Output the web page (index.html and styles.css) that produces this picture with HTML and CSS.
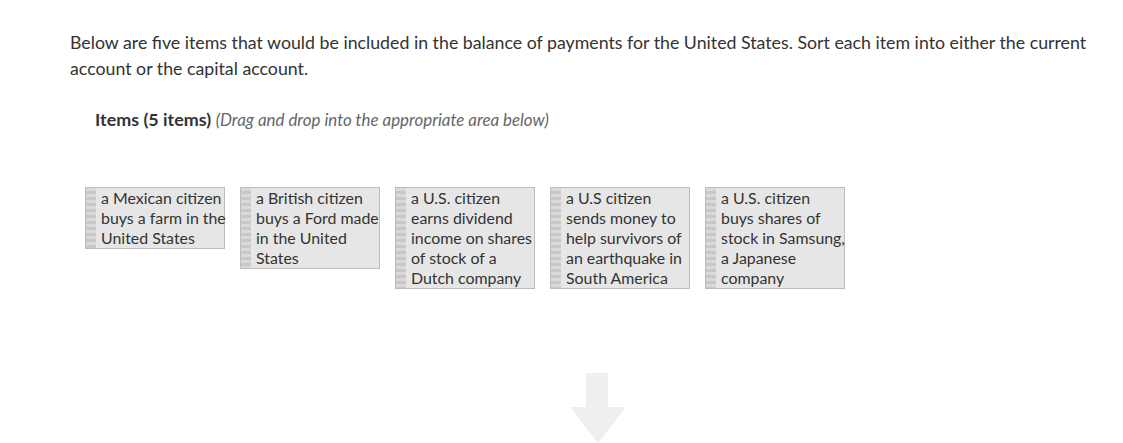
FILE: index.html
```html
<!DOCTYPE html>
<html lang="en">

<head>
    <meta charset="UTF-8">
    <meta name="viewport" content="width=device-width, initial-scale=1.0">
    <title>Balance of payments</title>
    <link rel="stylesheet" href="styles.css">
</head>

<body>

    <div id="question">
        <p class="prompt">Below are five items that would be included in the balance of payments for the United States. Sort each item into either the current account or the capital account.</p>

        <div class="items-title">
            <b>Items (5 items)</b> <i>(Drag and drop into the appropriate area below)</i>
        </div>

        <div class="items">
            <div class="item"><span class="handle"></span><span class="label">a Mexican citizen<br>buys a farm in the<br>United States</span></div>
            <div class="item"><span class="handle"></span><span class="label">a British citizen<br>buys a Ford made<br>in the United<br>States</span></div>
            <div class="item"><span class="handle"></span><span class="label">a U.S. citizen<br>earns dividend<br>income on shares<br>of stock of a<br>Dutch company</span></div>
            <div class="item"><span class="handle"></span><span class="label">a U.S citizen<br>sends money to<br>help survivors of<br>an earthquake in<br>South America</span></div>
            <div class="item"><span class="handle"></span><span class="label">a U.S. citizen<br>buys shares of<br>stock in Samsung,<br>a Japanese<br>company</span></div>
        </div>

        <div class="arrow">
            <svg width="58" height="72" viewBox="0 0 58 72">
                <polygon points="16,0 38,0 38,34 56,34 28,70 0,34 16,34" fill="#efefef" />
            </svg>
        </div>
    </div>

</body>

</html>
```

FILE: styles.css
```css
body {
    margin: 0;
    font-family: Lato, "Open Sans", sans-serif;
    color: #333;
    background: #fff;
}

#question {
    padding: 29px 20px 0 70px;
}

.prompt {
    margin: 0;
    font-size: 17.75px;
    line-height: 26px;
}

.items-title {
    margin: 26px 0 0 25px;
    font-size: 17.9px;
    line-height: 24px;
}

.items-title i {
    font-size: 16.9px;
    color: #666;
}

.items {
    display: flex;
    align-items: flex-start;
    gap: 15px;
    margin: 55px 0 0 15px;
}

.item {
    display: flex;
    width: 140px;
    box-sizing: border-box;
    background-color: #e6e6e6;
    border: 1px solid #bdbdbd;
    font-size: 15.9px;
    line-height: 20px;
    color: #333;
}

.handle {
    flex: none;
    width: 10px;
    background-color: #cdcdcd;
    background-image: repeating-linear-gradient(to bottom, #d9d9d9 0 3px, #c8c8c8 3px 6px);
}

.label {
    padding: 0 0 0 5px;
    white-space: nowrap;
}

.arrow {
    margin-top: 84px;
}

.arrow svg {
    display: block;
    margin-left: 500px;
}
```
